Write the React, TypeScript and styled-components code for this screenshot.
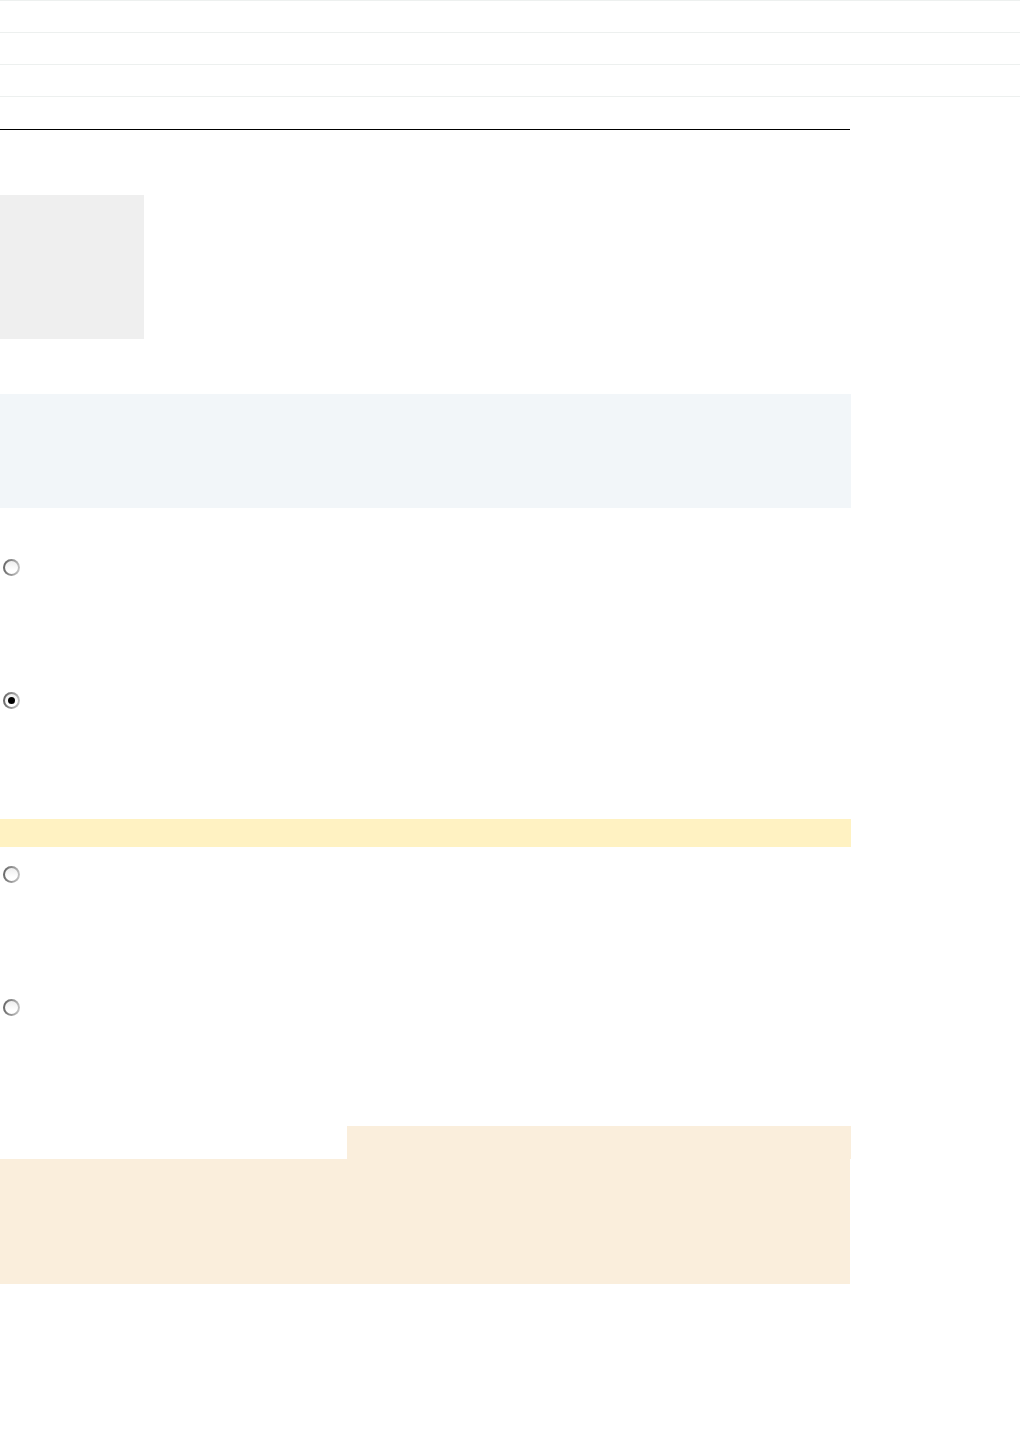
import React from "react";
import styled, { createGlobalStyle } from "styled-components";

const Global = createGlobalStyle`
  html, body { margin: 0; padding: 0; background: #ffffff; }
  body { font-family: "Liberation Sans", Arial, sans-serif; }
`;

const Page = styled.div`
  display: flex;
  flex-direction: column;
  width: 1021px;
`;

const TabStack = styled.div`
  display: flex;
  flex-direction: column;
  width: 1020px;
  border-top: 1px solid #edf0ef;
`;

const TabRow = styled.div`
  height: 31px;
  border-bottom: 1px solid #edf0ef;
`;

const Main = styled.div`
  display: flex;
  flex-direction: column;
  width: 851px;
`;

const Rule = styled.hr`
  margin: 32px 0 0 0;
  width: 850px;
  height: 0;
  border: none;
  border-top: 1px solid #000000;
`;

const Thumb = styled.div`
  margin-top: 65px;
  width: 144px;
  height: 144px;
  background: #efefef;
`;

const InfoBox = styled.div`
  margin-top: 55px;
  height: 114px;
  background: #f2f6f9;
`;

const OptionGroup = styled.div<{ $gap: number }>`
  display: flex;
  flex-direction: column;
  margin-top: ${(p) => p.$gap}px;
`;

const Option = styled.label<{ $top: number }>`
  display: flex;
  align-items: flex-start;
  height: 133px;
  padding: ${(p) => p.$top}px 0 0 3px;
  box-sizing: border-box;
`;

const Radio = styled.span<{ $checked?: boolean }>`
  position: relative;
  width: 17px;
  height: 17px;
  border-radius: 50%;
  background: linear-gradient(100deg, #5f5f5f 0%, #8c8c8c 45%, #cfcfcf 100%);
  flex: none;
  &::before {
    content: "";
    position: absolute;
    inset: 2px;
    border-radius: 50%;
    background: linear-gradient(180deg, #eeeeee 0%, #ffffff 70%);
  }
  &::after {
    content: "";
    display: ${(p) => (p.$checked ? "block" : "none")};
    position: absolute;
    left: 5px;
    top: 5px;
    width: 7px;
    height: 7px;
    border-radius: 50%;
    background: #000000;
  }
`;

const Highlight = styled.div`
  margin-top: 14px;
  height: 28px;
  background: #fff2c2;
`;

const Notice = styled.div`
  display: flex;
  flex-direction: column;
  margin-top: 13px;
`;

const NoticeTab = styled.div`
  align-self: flex-end;
  width: 504px;
  height: 33px;
  background: #faeedc;
`;

const NoticeBody = styled.div`
  width: 850px;
  height: 125px;
  background: #faeedc;
`;

export default function App() {
  return (
    <>
      <Global />
      <Page>
        <TabStack>
          <TabRow />
          <TabRow />
          <TabRow />
        </TabStack>
        <Main>
          <Rule />
          <Thumb />
          <InfoBox />
          <OptionGroup $gap={31}>
            <Option $top={20}>
              <Radio />
            </Option>
            <Option $top={20}>
              <Radio $checked />
            </Option>
          </OptionGroup>
          <Highlight />
          <OptionGroup $gap={0}>
            <Option $top={19}>
              <Radio />
            </Option>
            <Option $top={19}>
              <Radio />
            </Option>
          </OptionGroup>
          <Notice>
            <NoticeTab />
            <NoticeBody />
          </Notice>
        </Main>
      </Page>
    </>
  );
}
